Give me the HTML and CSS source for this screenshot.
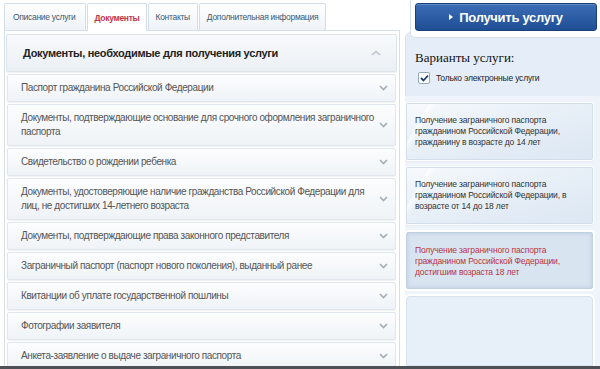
FILE: index.html
```html
<!DOCTYPE html>
<html lang="ru">
<head>
    <meta charset="UTF-8">
    <title>Документы, необходимые для получения услуги</title>
    <link rel="stylesheet" href="styles.css">
</head>
<body>

    <div class="page">
        <div class="main">
            <ul class="tabs">
                <li class="tab">Описание услуги</li>
                <li class="tab tab-active">Документы</li>
                <li class="tab">Контакты</li>
                <li class="tab">Дополнительная информация</li>
            </ul>

            <div class="panel">
                <div class="doc-head">
                    <span>Документы, необходимые для получения услуги</span>
                    <svg class="chev chev-up" width="10" height="6" viewBox="0 0 10 6"><polyline points="1,5 5,1.5 9,5" /></svg>
                </div>
                <ul class="docs">
                    <li class="doc"><span>Паспорт гражданина Российской Федерации</span><svg class="chev" width="9" height="6" viewBox="0 0 9 6"><polyline points="1,1 4.5,4.5 8,1" /></svg></li>
                    <li class="doc"><span>Документы, подтверждающие основание для срочного оформления заграничного паспорта</span><svg class="chev" width="9" height="6" viewBox="0 0 9 6"><polyline points="1,1 4.5,4.5 8,1" /></svg></li>
                    <li class="doc"><span>Свидетельство о рождении ребенка</span><svg class="chev" width="9" height="6" viewBox="0 0 9 6"><polyline points="1,1 4.5,4.5 8,1" /></svg></li>
                    <li class="doc"><span>Документы, удостоверяющие наличие гражданства Российской Федерации для лиц, не достигших 14-летнего возраста</span><svg class="chev" width="9" height="6" viewBox="0 0 9 6"><polyline points="1,1 4.5,4.5 8,1" /></svg></li>
                    <li class="doc"><span>Документы, подтверждающие права законного представителя</span><svg class="chev" width="9" height="6" viewBox="0 0 9 6"><polyline points="1,1 4.5,4.5 8,1" /></svg></li>
                    <li class="doc"><span>Заграничный паспорт (паспорт нового поколения), выданный ранее</span><svg class="chev" width="9" height="6" viewBox="0 0 9 6"><polyline points="1,1 4.5,4.5 8,1" /></svg></li>
                    <li class="doc"><span>Квитанции об уплате государственной пошлины</span><svg class="chev" width="9" height="6" viewBox="0 0 9 6"><polyline points="1,1 4.5,4.5 8,1" /></svg></li>
                    <li class="doc"><span>Фотографии заявителя</span><svg class="chev" width="9" height="6" viewBox="0 0 9 6"><polyline points="1,1 4.5,4.5 8,1" /></svg></li>
                    <li class="doc"><span>Анкета-заявление о выдаче заграничного паспорта</span><svg class="chev" width="9" height="6" viewBox="0 0 9 6"><polyline points="1,1 4.5,4.5 8,1" /></svg></li>
                </ul>
            </div>
        </div>

        <aside class="side">
            <div class="get-box">
                <button class="get-btn"><span class="tri"></span>Получить услугу</button>
            </div>

            <div class="variants">
                <h3>Варианты услуги:</h3>
                <label class="check">
                    <span class="check-box"><svg width="9" height="8" viewBox="0 0 9 8"><polyline points="1,4 3.5,6.5 8,1.5" /></svg></span>
                    Только электронные услуги
                </label>
            </div>

            <div class="cards">
                <div class="card">Получение заграничного паспорта гражданином Российской Федерации, гражданину в возрасте до 14 лет</div>
                <div class="card">Получение заграничного паспорта гражданином Российской Федерации, в возрасте от 14 до 18 лет</div>
                <div class="card card-active">Получение заграничного паспорта гражданином Российской Федерации, достигшим возраста 18 лет</div>
                <div class="card card-empty"></div>
            </div>
        </aside>
    </div>
    <div class="bottom-line"></div>

</body>
</html>
```

FILE: styles.css
```css
body {
    margin: 0;
    padding: 0;
    width: 600px;
    height: 369px;
    overflow: hidden;
    background-color: #fff;
    font-family: 'Liberation Sans', Arial, sans-serif;
    color: #333;
}
ul {
    list-style: none;
    margin: 0;
    padding: 0;
}

.page {
    display: flex;
    height: 366px;
    overflow: hidden;
}
.bottom-line {
    height: 3px;
    background-color: #4d5157; /* тёмная полоса внизу */
}

/* ---------- левая колонка ---------- */
.main {
    width: 396px;
    padding-left: 4px;
    padding-top: 3px;
}
.tabs {
    display: flex;
    gap: 1px;
    position: relative;
    z-index: 1;
}
.tab {
    height: 26px;
    padding: 0 7px;
    display: flex;
    align-items: center;
    font-size: 8.5px;
    letter-spacing: -0.3px;
    color: #3d5873;
    background: linear-gradient(#ffffff, #eef3f8);
    border: 1px solid #d2dde8;
    border-bottom: none;
    border-radius: 2px 2px 0 0;
}
.tab:first-child {
    padding: 0 10px 0 8px;
}
.tab-active {
    background: #fff;
    color: #c2364c;
    font-weight: bold;
    height: 27px;
    margin-bottom: -1px;
    padding: 0 6px;
}

.panel {
    border: 1px solid #d5dfe8;
    border-bottom: none;
    padding: 3px 2px 0 1px;
    height: 340px;
}
.doc-head {
    height: 38px;
    box-sizing: border-box;
    display: flex;
    align-items: center;
    justify-content: space-between;
    padding: 0 15px 0 16px;
    font-size: 11px;
    letter-spacing: -0.3px;
    font-weight: bold;
    color: #222;
    background: linear-gradient(#f8fafc, #ebf0f5);
    border: 1px solid #dbe3eb;
    border-radius: 2px;
    box-shadow: 0 1px 1px rgba(0, 0, 0, 0.06);
    margin-bottom: 2px;
}
.chev {
    flex: none;
    fill: none;
    stroke: #a3adb7;
    stroke-width: 1.6;
}
.chev-up {
    stroke: #bcc5ce;
}
.doc {
    display: flex;
    align-items: center;
    justify-content: space-between;
    margin: 0 1px 2px 1px;
    padding: 6px 7px 6px 13px;
    font-size: 10px;
    letter-spacing: -0.4px;
    line-height: 14px;
    color: #555;
    background: linear-gradient(#fcfdfe, #eff3f7);
    border: 1px solid #dfe6ee;
    border-radius: 2px;
    box-shadow: 0 1px 1px rgba(0, 0, 0, 0.06);
}
.doc span {
    max-width: 359px;
}

/* ---------- правая колонка ---------- */
.side {
    width: 200px;
    display: flex;
    flex-direction: column;
}
.get-box {
    position: relative;
    z-index: 1;
    margin-left: 10px;
    padding: 3px 3px 6px 4px;
    background: #fff;
    border-left: 1px solid #d3dfea;
    border-bottom: 1px solid #d3dfea;
    border-bottom-left-radius: 5px;
}
.get-btn {
    width: 182px;
    height: 28px;
    display: flex;
    align-items: center;
    justify-content: center;
    gap: 6px;
    font-family: 'Liberation Sans', Arial, sans-serif;
    font-size: 13px;
    letter-spacing: -0.3px;
    font-weight: bold;
    color: #fff;
    background: linear-gradient(#3b6db6, #1f4e94);
    border: 1px solid #183f78;
    border-radius: 3px;
    box-shadow: inset 0 1px 0 rgba(255, 255, 255, 0.2);
    padding: 0;
}
.tri {
    width: 0;
    height: 0;
    border-left: 4px solid #fff;
    border-top: 3.5px solid transparent;
    border-bottom: 3.5px solid transparent;
}

.variants {
    margin-left: 5px;
    margin-top: -6px;
    padding: 18px 10px 12px 9px;
    background-color: #e5eef8;
    border-top-left-radius: 6px;
    border-left: 1px solid #d5e1ec;
}
.variants h3 {
    margin: 0 0 6px 0;
    font-family: 'Liberation Serif', 'Times New Roman', serif;
    font-size: 13px;
    font-weight: normal;
    color: #111;
}
.check {
    display: flex;
    align-items: center;
    gap: 6px;
    padding-left: 3px;
    font-size: 8.5px;
    letter-spacing: -0.2px;
    color: #222;
}
.check-box {
    width: 10px;
    height: 10px;
    display: flex;
    align-items: center;
    justify-content: center;
    background: #fff;
    border: 1px solid #95a9bd;
    border-radius: 2px;
}
.check-box svg {
    fill: none;
    stroke: #1c3d6f;
    stroke-width: 1.8;
}

.cards {
    flex: 1;
    margin-left: 5px;
    padding: 7px 7px 0 1px;
    background-color: #eef4fa;
    display: flex;
    flex-direction: column;
    gap: 7px;
}
.card {
    height: 57px;
    box-sizing: border-box;
    padding: 11px 14px 0 8px;
    font-size: 8.5px;
    letter-spacing: -0.15px;
    line-height: 11px;
    color: #333;
    background:
        linear-gradient(120deg, transparent 0, transparent 18px, rgba(255, 255, 255, 0.7) 20px, transparent 26px),
        linear-gradient(165deg, #f7fafd 0%, #eaf1f8 35%, #dce7f3 100%);
    border: 1px solid #d2dfeb;
    border-radius: 2px;
    box-shadow: 0 0 0 1px #fbfdff, 0 1px 2px rgba(0, 0, 0, 0.12);
}
.card-active {
    color: #b8343f;
    background: #d9e4f1;
    border-color: #bfd1e3;
    box-shadow: 0 0 0 2px #fff, inset 0 0 4px rgba(90, 120, 160, 0.25);
    margin-top: 1px;
    padding-top: 12px;
}
.card-empty {
    flex: 1;
    height: auto;
    background: #e7eff8;
    border-color: #d6e2ed;
    box-shadow: 0 0 0 2px #fff;
    border-radius: 4px 4px 0 0;
}
```
